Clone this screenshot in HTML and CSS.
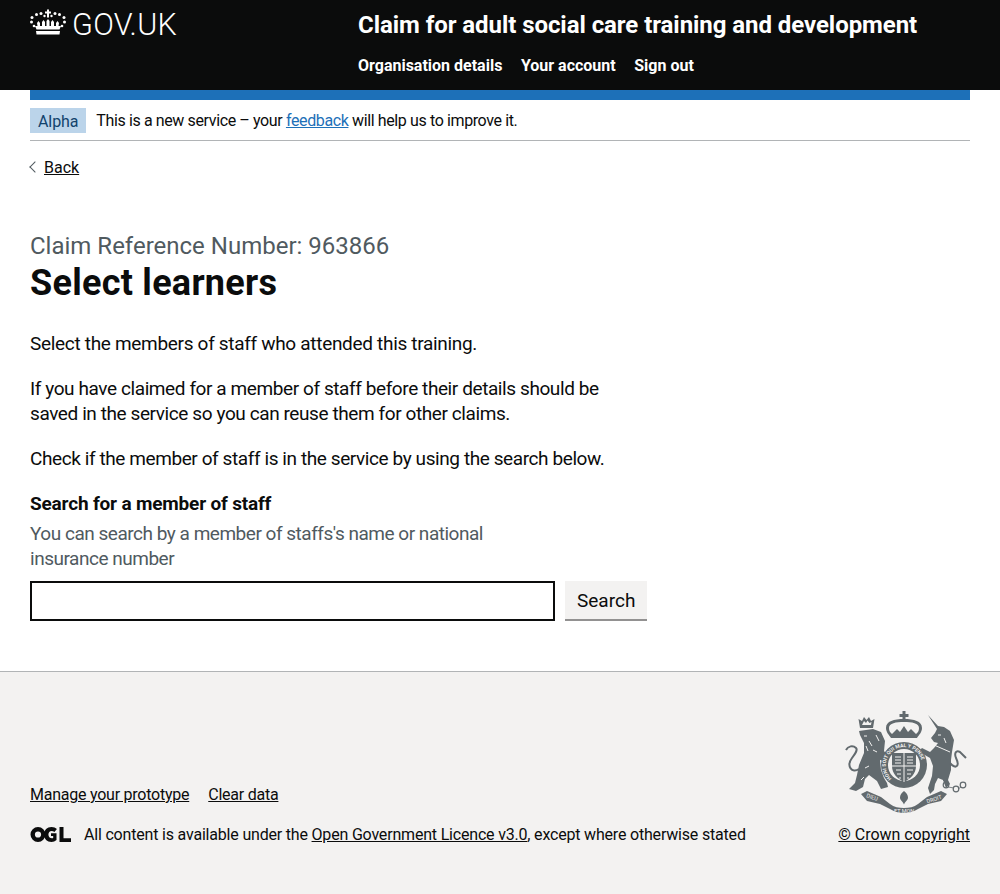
FILE: index.html
```html
<!DOCTYPE html>
<html lang="en">
<head>
    <meta charset="UTF-8">
    <meta name="viewport" content="width=device-width, initial-scale=1.0">
    <title>Select learners</title>
    <link rel="stylesheet" href="styles.css">
</head>
<body>
    <header class="header">
        <div class="header-inner">
            <a class="logo" href="#">
                <svg class="crown" viewBox="0 0 36 28" aria-hidden="true">
                    <g fill="#fff">
                        <path d="M17 1.500h2v2h2v2h-2v4h-2v-4h-2v-2h2z"/>
                        <circle cx="2" cy="9.500" r="1.500"/>
                        <circle cx="6.500" cy="6.500" r="1.500"/>
                        <circle cx="11" cy="5.500" r="1.500"/>
                        <circle cx="14.500" cy="8" r="1.200"/>
                        <circle cx="21.500" cy="8" r="1.200"/>
                        <circle cx="25" cy="5.500" r="1.500"/>
                        <circle cx="29.500" cy="6.500" r="1.500"/>
                        <circle cx="34" cy="9.500" r="1.500"/>
                        <circle cx="1.500" cy="14" r="1.500"/>
                        <circle cx="34.500" cy="14" r="1.500"/>
                        <circle cx="4" cy="18" r="1.300"/>
                        <circle cx="32" cy="18" r="1.300"/>
                        <path d="M7 15l1.500-2 1.500 2v6H8z"/>
                        <path d="M12 14l1.500-2 1.500 2v7h-3z"/>
                        <path d="M16.500 13L18 11l1.500 2v8h-3z"/>
                        <path d="M21 14l1.500-2 1.500 2v7h-3z"/>
                        <path d="M26 15l1.500-2 1.500 2-1 6h-2z"/>
                        <path d="M5 18h26l-1.500 3.500h-23z"/>
                        <path d="M6 23h24l-.5 3.500h-23z"/>
                    </g>
                </svg>
                <span class="logo-text">GOV.UK</span>
            </a>
            <div class="header-content">
                <a class="service-name" href="#">Claim for adult social care training and development</a>
                <nav class="header-nav">
                    <a href="#">Organisation details</a>
                    <a href="#">Your account</a>
                    <a href="#">Sign out</a>
                </nav>
            </div>
        </div>
    </header>

    <div class="width-container">
        <div class="blue-bar"></div>
        <div class="phase-banner">
            <strong class="phase-tag">Alpha</strong>
            <span>This is a new service – your <a class="link-blue" href="#">feedback</a> will help us to improve it.</span>
        </div>
        <a class="back-link" href="#">Back</a>

        <main class="main">
            <span class="caption">Claim Reference Number: 963866</span>
            <h1 class="title">Select learners</h1>
            <div class="two-thirds">
                <p>Select the members of staff who attended this training.</p>
                <p>If you have claimed for a member of staff before their details should be saved in the service so you can reuse them for other claims.</p>
                <p>Check if the member of staff is in the service by using the search below.</p>
            </div>
            <label class="search-label" for="search">Search for a member of staff</label>
            <div class="search-hint">You can search by a member of staffs's name or national insurance number</div>
            <div class="search-row">
                <input class="search-input" id="search" type="text">
                <button class="search-button" type="button">Search</button>
            </div>
        </main>
    </div>

    <footer class="footer">
        <div class="footer-inner">
            <div class="footer-left">
                <div class="footer-links">
                    <a href="#">Manage your prototype</a>
                    <a href="#">Clear data</a>
                </div>
                <div class="licence">
                    <svg class="ogl" viewBox="0 0 41 17" aria-hidden="true">
                        <g fill="#0b0c0c">
                            <path fill-rule="evenodd" d="M8 1a7.500 7.500 0 1 0 0 15 7.500 7.500 0 0 0 0-15zm0 4.400a3.100 3.100 0 1 1 0 6.200 3.100 3.100 0 0 1 0-6.200z"/>
                            <path d="M29.500 1h4v11.200H41V16H29.500z"/>
                            <path d="M21.500 1c2.300 0 4.100.8 5.400 2l-2.500 2.900c-.8-.6-1.700-1-2.800-1-1.900 0-3.200 1.600-3.200 3.600 0 2.100 1.400 3.700 3.500 3.700.5 0 .9 0 1.300-.2V10h-2.200V7.300h5.500V14c-1.500 1.300-3 2-5 2-4.400 0-7.500-3.100-7.500-7.500S17.100 1 21.500 1z"/>
                        </g>
                    </svg>
                    <span>All content is available under the <a href="#">Open Government Licence v3.0</a>, except where otherwise stated</span>
                </div>
            </div>
            <div class="footer-right">
                <svg class="crest" viewBox="0 0 132 110" aria-hidden="true">
                    <defs>
                        <path id="garter" d="M53.500 70.500A18.200 18.200 0 1 1 78.500 70.500"/>
                    </defs>
                    <g fill="#626a6e">
                        <!-- lion -->
                        <path fill-rule="evenodd" d="M22 20l-1.500-9 3.500 2 2-4 2.500 3 2.500-3 2 4 3.500-2-1.500 9zm2-3h9l.5-3-2 1-2-2.500-1.500 2.500-2-2z"/>
                        <path d="M21 23l14-2 8 3 4 9-1 10 3 4 7 6-3 3-7-3-4-1 1 10 3 8 3 5 1 4-7 2-4-8-8-6-4 4-2 8-7 4-7-2 6-6 2-8 2-10 5-12v-10l-4-8z"/>
                        <path class="crest-tail" d="M21 61C14 66 8 58 14 50c3-4 6-8 4-10-3-3-8-2-10 2"/>
                        <path class="crest-line" d="M26 28h3M31 33l3 5M38 27l3 6M35 42l4 2M28 38l2 5M27 60l4-2M23 72l3-3"/>
                        <!-- unicorn -->
                        <path d="M90 7l10 11 6 1 6 4 4 9-2 12-1 8v10l-3 10 2 4-4 4-3-8-5-2-3 6-1 6-4 4-2-6 4-12 1-10-3-8-7-4-5-2 4-4 8 4 4-4 4-5-4-1-3-4 4-5 2-4z"/>
                        <path class="crest-tail" d="M112 55c6 7 10 3 6-5-2-5 0-8 4-6l6 6"/>
                        <path class="crest-line" d="M96 37l16 7M100 27h3M106 30l2 5"/>
                        <path class="crest-tail crest-chain" d="M105 72l3 3M110 79l6 1M120 81l3-2"/>
                        <circle class="crest-ring" cx="108" cy="77" r="2.800"/>
                        <circle class="crest-ring" cx="118" cy="81" r="2.800"/>
                        <circle class="crest-ring" cx="125" cy="77" r="2.800"/>
                        <!-- crown -->
                        <path d="M64.500 3h3v3h3v3h-3v3h-3V9h-3V6h3z"/>
                        <path fill-rule="evenodd" d="M66 11c-10 0-18 2-18 9 0 4 3 7 5 10h26c2-3 5-6 5-10 0-7-8-9-18-9zm0 3c-8 0-15 1-15 6 0 3 1 4 3 6l5-5 3 3 4-6 4 6 3-3 5 5c2-2 3-3 3-6 0-5-7-6-15-6z"/>
                        <!-- garter and shield -->
                        <circle cx="66" cy="57" r="23"/>
                        <circle class="crest-bg" cx="66" cy="57" r="16"/>
                        <path d="M54 45h24v13c0 8-6 13-12 16-6-3-12-8-12-16z"/>
                        <path class="crest-line" d="M66 45v29M54 58h24M57 49h6M69 49h6M57 52h6M69 52h6M57 55h6M69 55h6M58 62h5M69 62h6M59 66h4M69 66h4M61 70h2M69 70h2"/>
                        <text class="crest-text">
                            <textPath href="#garter">HONI SOIT QUI MAL Y PENSE</textPath>
                        </text>
                        <!-- motto -->
                        <path d="M23 86l6-3 14 6 9 7c4 3 9 4 14 4s10-1 14-4l9-7 14-6 6 3-6 7-13 3-10 5c-5 3-10 4-14 4s-9-1-14-4l-10-5-13-3z"/>
                        <path d="M66 83c-2.500 2-4 4-4 6.500s2.500 3.500 4 7c1.500-3.500 4-4.500 4-7s-1.500-4.500-4-6.500z"/>
                        <text class="crest-motto" x="28" y="91" transform="rotate(18 34 90)">DIEU</text>
                        <text class="crest-motto" x="56" y="105">ET MON</text>
                        <text class="crest-motto" x="88" y="93" transform="rotate(-18 96 90)">DROIT</text>
                    </g>
                </svg>
                <a class="copyright" href="#">© Crown copyright</a>
            </div>
        </div>
    </footer>
</body>
</html>
```

FILE: styles.css
```css
body {
    margin: 0;
    font-family: Roboto, Arial, sans-serif;
    font-size: 16px;
    color: #0b0c0c;
    background: #fff;
}
a {
    color: inherit;
}
.header {
    background: #0b0c0c;
    height: 90px;
}
.header-inner {
    display: flex;
    padding: 0 30px;
}
.logo {
    display: flex;
    align-items: center;
    gap: 6px;
    width: 328px;
    height: 50px;
    color: #fff;
    text-decoration: none;
}
.crown {
    width: 36px;
    height: 28px;
    margin-bottom: 6px;
}
.logo-text {
    font-size: 30.5px;
    font-weight: 300;
    line-height: 52px;
    letter-spacing: 0.3px;
}
.header-content {
    color: #fff;
}
.service-name {
    display: block;
    font-size: 24px;
    font-weight: 700;
    line-height: 50px;
    letter-spacing: -0.06px;
    text-decoration: none;
    white-space: nowrap;
}
.header-nav {
    display: flex;
    gap: 18.5px;
    font-size: 16px;
    font-weight: 700;
    line-height: 32px;
}
.header-nav a {
    text-decoration: none;
}
.width-container {
    padding: 0 30px;
}
.blue-bar {
    background: #1d70b8;
    height: 10px;
}
.phase-banner {
    display: flex;
    align-items: center;
    gap: 10px;
    padding: 7px 0 6px;
    border-bottom: 1px solid #b1b4b6;
    font-size: 16px;
    line-height: 27px;
    letter-spacing: -0.38px;
}
.phase-tag {
    height: 25px;
    background: #bbd4ea;
    color: #12436d;
    font-weight: 400;
    letter-spacing: -0.1px;
    padding: 0 8px;
}
.link-blue {
    color: #1d70b8;
}
.back-link {
    display: inline-block;
    position: relative;
    margin-top: 16px;
    margin-left: 14px;
    font-size: 16px;
    line-height: 22px;
}
.back-link::before {
    content: "";
    position: absolute;
    left: -13px;
    top: 6px;
    width: 7px;
    height: 7px;
    border-left: 1px solid #505a5f;
    border-bottom: 1px solid #505a5f;
    transform: rotate(45deg);
}
.main {
    padding-top: 52px;
    padding-bottom: 50px;
}
.caption {
    display: block;
    font-size: 24px;
    line-height: 30px;
    color: #505a5f;
}
.title {
    margin: 0 0 25px;
    font-size: 36px;
    line-height: 45px;
    letter-spacing: 0.27px;
    font-weight: 700;
}
.two-thirds {
    width: 600px;
}
.two-thirds p {
    margin: 0 0 20px;
    font-size: 19px;
    line-height: 25px;
    letter-spacing: -0.41px;
}
.two-thirds p:first-child {
    letter-spacing: -0.31px;
}
.search-label {
    display: block;
    margin-bottom: 5px;
    font-size: 19px;
    font-weight: 700;
    line-height: 25px;
    letter-spacing: -0.18px;
}
.search-hint {
    width: 500px;
    margin-bottom: 10px;
    font-size: 19px;
    line-height: 25px;
    letter-spacing: -0.48px;
    color: #505a5f;
}
.search-row {
    display: flex;
    gap: 10px;
}
.search-input {
    box-sizing: border-box;
    width: 525px;
    height: 40px;
    border: 2px solid #0b0c0c;
    background: #fff;
    padding: 5px;
    font: inherit;
}
.search-button {
    box-sizing: border-box;
    height: 40px;
    padding: 0 12px;
    border: 0;
    border-bottom: 2px solid #929191;
    background: #f3f2f1;
    color: #0b0c0c;
    font-family: inherit;
    font-size: 19px;
}
.footer {
    background: #f3f2f1;
    border-top: 1px solid #b1b4b6;
    height: 223px;
    box-sizing: border-box;
}
.footer-inner {
    display: flex;
    justify-content: space-between;
    align-items: flex-end;
    padding: 36px 30px 0;
}
.footer-links {
    display: flex;
    gap: 19px;
    margin-bottom: 17px;
    font-size: 16px;
    line-height: 23px;
    letter-spacing: -0.24px;
}
.licence {
    display: flex;
    align-items: center;
    gap: 13px;
    font-size: 16px;
    line-height: 23px;
    letter-spacing: -0.19px;
}
.ogl {
    width: 41px;
    height: 17px;
}
.footer-right {
    display: flex;
    flex-direction: column;
    align-items: flex-end;
}
.crest {
    width: 132px;
    height: 110px;
    margin-bottom: 5px;
}
.crest-tail {
    fill: none;
    stroke: #626a6e;
    stroke-width: 2;
}
.crest-chain {
    stroke-width: 0.8;
}
.crest-ring {
    fill: none;
    stroke: #626a6e;
    stroke-width: 1.2;
}
.crest-bg {
    fill: #f3f2f1;
}
.crest-line {
    fill: none;
    stroke: #f3f2f1;
    stroke-width: 1;
}
.crest-text {
    fill: #f3f2f1;
    font-size: 5px;
    font-weight: 700;
}
.crest-motto {
    fill: #f3f2f1;
    font-size: 5.5px;
}
.copyright {
    font-size: 16px;
    line-height: 23px;
    letter-spacing: -0.05px;
}
```
